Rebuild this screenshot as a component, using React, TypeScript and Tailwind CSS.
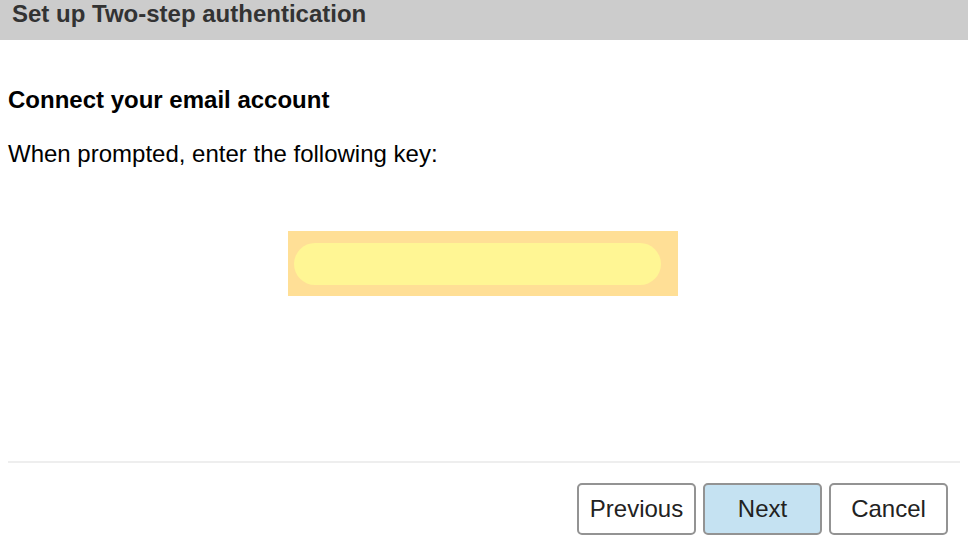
export default function App() {
  return (
    <div className="flex h-[548px] w-[968px] flex-col bg-white font-['Liberation_Sans',Arial,sans-serif] text-black">
      <div className="flex h-10 items-start bg-[#cccccc] pl-3">
        <h1 className="text-[24px] font-bold leading-[27px] text-[#333333]">Set up Two-step authentication</h1>
      </div>
      <div className="flex flex-1 flex-col px-2">
        <h2 className="mt-[48px] text-[24px] font-bold leading-[24px]">Connect your email account</h2>
        <p className="mt-[30px] text-[24px] leading-[24px]">When prompted, enter the following key:</p>
        <div className="mt-[65px] flex justify-center pr-[2px]">
          <div className="flex h-[65px] w-[390px] items-center bg-[#ffdf96] pl-[6px] pr-[17px]">
            <div className="h-[42px] flex-1 rounded-full bg-[#fff694]" />
          </div>
        </div>
        <div className="mt-[165px] h-[2px] bg-[#eeeeee]" />
        <div className="mt-[20px] flex justify-end gap-[7px] pr-[12px]">
          <button className="h-[52px] w-[119px] rounded-[5px] border-2 border-[#939393] bg-white text-[24px] text-[#222222]">
            Previous
          </button>
          <button className="h-[52px] w-[119px] rounded-[5px] border-2 border-[#939393] bg-[#c5e2f2] text-[24px] text-[#222222]">
            Next
          </button>
          <button className="h-[52px] w-[119px] rounded-[5px] border-2 border-[#939393] bg-white text-[24px] text-[#222222]">
            Cancel
          </button>
        </div>
      </div>
    </div>
  );
}
